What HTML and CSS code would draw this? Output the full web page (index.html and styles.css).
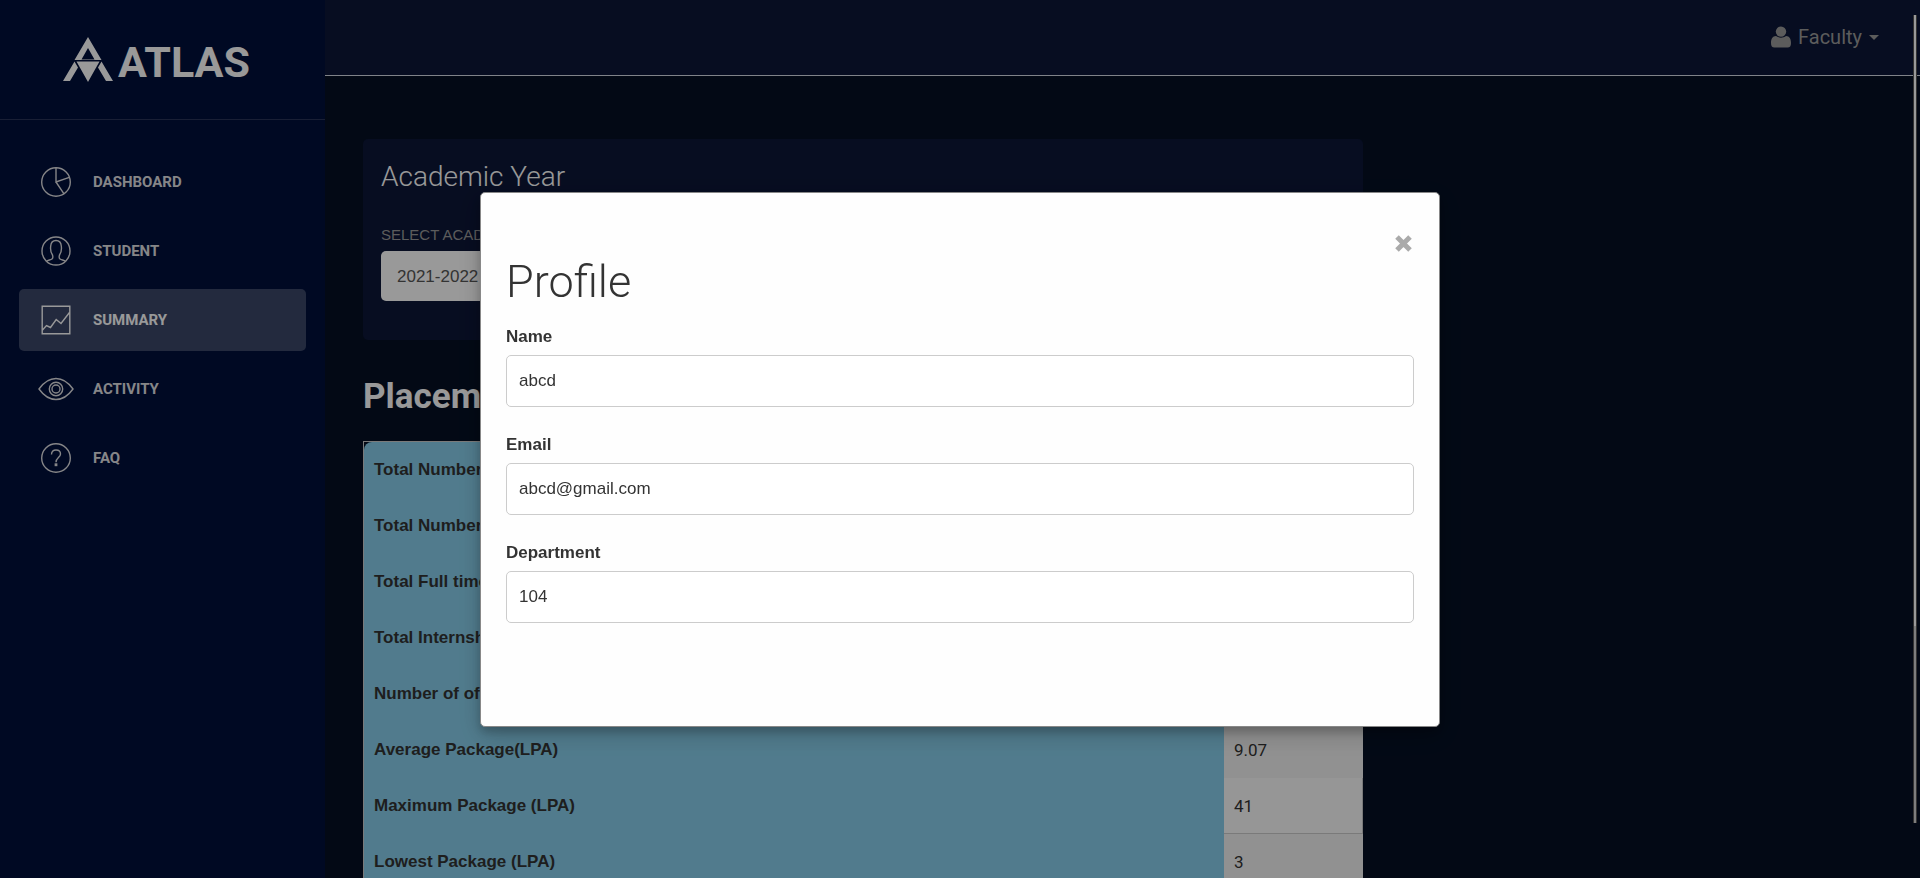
FILE: index.html
```html
<!DOCTYPE html>
<html lang="en">
<head>
<meta charset="utf-8">
<title>Atlas</title>
<link rel="stylesheet" href="styles.css">
</head>
<body>
<div class="app">
  <aside class="sidebar">
    <a class="brand" href="#">
      <svg class="brand-mark" viewBox="0 0 50 45" aria-hidden="true">
        <path fill-rule="evenodd" d="M25 0 38.500 23H11.500ZM25 11 18.500 22.500H31.500Z"/>
        <path d="M13.500 24.500h23L25 45ZM11.500 24.500 15 30.500 7 44H0ZM38.500 24.500 35 30.500 43 44H50Z"/>
      </svg>
      <span>ATLAS</span>
    </a>
    <nav class="nav">
      <a class="nav-item" href="#">
        <svg viewBox="0 0 36 32"><circle cx="18" cy="16" r="14.300"/><path d="M18 1.700V16L31.300 11.300M18 16 26 27.800"/></svg>
        <span>Dashboard</span>
      </a>
      <a class="nav-item" href="#">
        <svg viewBox="0 0 36 32"><circle cx="18" cy="16" r="14"/><path d="M8.500 26.300c1.500-1.300 4-1.200 5.500-2.300 1.200-.9.900-2.700.5-4-1.500-2-2.300-5-1.800-9 .3-3.800 2.300-5.500 5.300-5.500s5 1.700 5.300 5.500c.5 4-.3 7-1.800 9-.4 1.300-.7 3.100.5 4 1.500 1.100 4 1 5.500 2.300"/></svg>
        <span>Student</span>
      </a>
      <a class="nav-item active" href="#">
        <svg viewBox="0 0 36 32"><path d="M4.200 2.200H31.800V29.800H4.200ZM4.500 26 8.500 21.500 12.500 23.500 18.200 15.500 23 19.500 31.500 8.500"/></svg>
        <span>Summary</span>
      </a>
      <a class="nav-item" href="#">
        <svg viewBox="0 0 36 32"><path d="M1 16C11 2 25 2 35 16 25 30 11 30 1 16Z"/><circle cx="18" cy="16" r="6.700"/><circle cx="18" cy="16" r="4"/></svg>
        <span>Activity</span>
      </a>
      <a class="nav-item" href="#">
        <svg viewBox="0 0 36 32"><circle cx="18" cy="16" r="14.300"/><path d="M13.500 12.500c0-3 1.900-4.500 4.500-4.500s4.500 1.500 4.500 4c0 3.500-4.500 3.800-4.500 8.200"/><path d="M17.300 22h1.400v1.500h-1.400Z"/></svg>
        <span>FAQ</span>
      </a>
    </nav>
  </aside>

  <div class="main">
    <header class="topbar">
      <button class="user" type="button">
        <svg class="user-icon" viewBox="0 0 20 22" aria-hidden="true"><path d="M0 17c0-4 1.500-7 5-7 3 2.200 7 2.200 10 0 3.500 0 5 3 5 7 0 3-1 4.500-3.500 4.500h-13C1 21.500 0 20 0 17Z"/><circle cx="10" cy="5.600" r="5.200"/></svg>
        <span>Faculty</span>
        <svg class="caret" viewBox="0 0 10 7" aria-hidden="true"><path d="M0 2H10L5 7Z"/></svg>
      </button>
    </header>

    <main class="content">
      <section class="card">
        <h4 class="card-title">Academic Year</h4>
        <label class="card-label" for="year">SELECT ACADEMIC YEAR</label>
        <select class="card-select" id="year"><option>2021-2022</option></select>
      </section>

      <h2 class="heading">Placement Statistics</h2>
      <div class="table-wrap">
        <table class="stats">
          <tbody>
            <tr><th scope="row">Total Number of Students</th><td>120</td></tr>
            <tr><th scope="row">Total Number of Offers</th><td>98</td></tr>
            <tr><th scope="row">Total Full time Offers</th><td>64</td></tr>
            <tr><th scope="row">Total Internships</th><td>34</td></tr>
            <tr><th scope="row">Number of offers</th><td>98</td></tr>
            <tr><th scope="row">Average Package(LPA)</th><td>9.07</td></tr>
            <tr><th scope="row">Maximum Package (LPA)</th><td>41</td></tr>
            <tr><th scope="row">Lowest Package (LPA)</th><td>3</td></tr>
          </tbody>
        </table>
      </div>
    </main>
  </div>
</div>

<div class="backdrop">
  <div class="modal" role="dialog" aria-labelledby="profile-title">
    <button class="close" type="button" aria-label="Close">
      <svg viewBox="0 0 22 22" aria-hidden="true"><path d="M5 5 18 18M18 5 5 18"/></svg>
    </button>
    <h1 class="modal-title" id="profile-title">Profile</h1>
    <form class="form">
      <div class="field"><label for="name">Name</label><input id="name" type="text" value="abcd"></div>
      <div class="field"><label for="email">Email</label><input id="email" type="text" value="abcd@gmail.com"></div>
      <div class="field"><label for="dept">Department</label><input id="dept" type="text" value="104"></div>
    </form>
  </div>
</div>
<div class="scrollbar"><div class="thumb"></div></div>
</body>
</html>
```
FILE: styles.css
```css
* { box-sizing: border-box; }

body {
  margin: 0;
  height: 100vh;
  overflow: hidden;
  background: #051024;
  color: #333;
  font-family: Roboto, "Liberation Sans", sans-serif;
  font-size: 17px;
}

h1, h2, h4 { margin: 0; }
a { color: inherit; text-decoration: none; }
button { border: 0; padding: 0; background: none; font: inherit; cursor: pointer; }

.app { display: flex; height: 100vh; overflow: hidden; }

/* Sidebar */
.sidebar { flex: 0 0 325px; background: #000f3b; color: #fff; }

.brand {
  display: flex;
  align-items: center;
  gap: 5px;
  height: 120px;
  padding: 0 0 0 63px;
  border-bottom: 1px solid #2b3459;
  font-size: 43px;
  font-weight: 700;
}
.brand span { padding-top: 4px; }
.brand-mark { width: 50px; height: 45px; fill: #fff; }

.nav { display: flex; flex-direction: column; gap: 7px; padding: 31px 19px; }
.nav-item {
  display: flex;
  align-items: center;
  gap: 19px;
  height: 62px;
  padding: 0 19px;
  border-radius: 5px;
  color: #dfdfe2;
  font-size: 15px;
  font-weight: 700;
  text-transform: uppercase;
}
.nav-item svg { width: 36px; height: 32px; fill: none; stroke: currentColor; stroke-width: 1.4; }
.nav-item.active { background: #3b4768; color: #fff; }

/* Top bar */
.main { flex: 1; min-width: 0; }
.topbar {
  display: flex;
  justify-content: flex-end;
  height: 76px;
  padding: 0 41px 2px 0;
  background: #0c1637;
  border-bottom: 1px solid #d6dae4;
}
.user { display: flex; align-items: center; gap: 7px; color: #9a9a9a; font-size: 20px; }
.user-icon { width: 20px; height: 22px; fill: currentColor; }
.caret { width: 10px; height: 7px; fill: currentColor; }

/* Content */
.content { padding: 63px 38px 0; }
.card {
  max-width: 1000px;
  height: 201px;
  padding: 18px;
  border-radius: 5px;
  background: #0c1637;
}
.card-title { color: #fff; font-size: 28px; font-weight: 300; line-height: 40px; }
.card-label {
  display: block;
  margin-top: 28px;
  color: #9a9a9a;
  font: 15px/20px "Liberation Sans", sans-serif;
}
.card-select {
  display: block;
  width: 320px;
  height: 50px;
  margin-top: 6px;
  padding: 0 16px;
  border: 0;
  border-radius: 5px;
  appearance: none;
  background: #fff;
  color: #565656;
  font: 17px "Liberation Sans", sans-serif;
}
.heading { margin: 37px 0 24px; color: #fff; font-size: 35px; font-weight: 700; line-height: 40px; }

.table-wrap { max-width: 1000px; border: 1px solid #ccc; border-right: 0; }
.stats {
  width: 100%;
  border-spacing: 0;
  table-layout: fixed;
  border-radius: 8px 0 0 0;
  overflow: hidden;
}
.stats th, .stats td { height: 56px; padding: 0 10px; text-align: left; }
.stats th {
  background: skyblue;
  font-family: "Liberation Sans", sans-serif;
  font-weight: 700;
}
.stats td { width: 139px; background: #f2f2f2; }
.stats tr:nth-child(odd) td { background: #fbfbfb; border-right: 1px solid #ccc; border-bottom: 1px solid #ccc; }

/* Modal */
.backdrop {
  position: fixed;
  inset: 0;
  padding-top: 192px;
  background: rgba(0, 0, 0, 0.4);
}
.modal {
  display: flex;
  flex-direction: column;
  width: 50%;
  margin: 0 auto;
  padding: 34px 25px 103px;
  border: 1px solid #888;
  border-radius: 5px;
  background: #fefefe;
  box-shadow: 0 5px 10px rgba(0, 0, 0, 0.2), 0 8px 25px rgba(0, 0, 0, 0.19);
  color: #333;
  font-family: "Liberation Sans", sans-serif;
}
.close { display: flex; align-items: center; align-self: flex-end; height: 32px; }
.close svg { width: 22px; height: 22px; fill: none; stroke: #aaa; stroke-width: 5; }
.modal-title { font: 300 45px/45px Roboto, sans-serif; }
.form { display: flex; flex-direction: column; gap: 26px; margin-top: 21px; }
.field { display: flex; flex-direction: column; gap: 6px; font-size: 17px; line-height: 24px; }
.field label { font-weight: 700; }
.field input {
  height: 52px;
  padding: 0 12px;
  border: 1px solid #ccc;
  border-radius: 5px;
  background: #fff;
  color: #333;
  font: inherit;
}

.scrollbar {
  position: fixed;
  top: 15px;
  right: 3px;
  width: 4px;
  height: 92vh;
  border-left: 1px solid #333;
  border-right: 1px solid #333;
  background: #7d7d7d;
}
.thumb { height: 611px; background: #999; }
```
